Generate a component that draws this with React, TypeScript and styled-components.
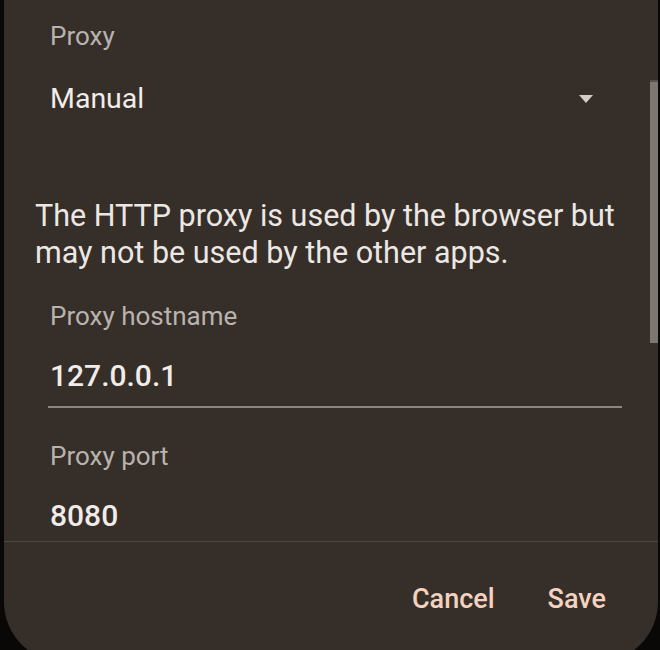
import React from "react";
import styled, { createGlobalStyle } from "styled-components";

const Global = createGlobalStyle`
  html, body { margin: 0; padding: 0; background: #0a0807; height: 650px; overflow: hidden; }
  #root { height: 650px; }
`;

const Panel = styled.div`
  position: relative;
  margin: 0 2px 0 4px;
  height: 662px;
  background: #352e29;
  border-radius: 0 0 60px 60px;
  font-family: Roboto, "Noto Sans", sans-serif;
  display: flex;
  flex-direction: column;
  overflow: hidden;
`;

const Body = styled.div`
  height: 542px;
  display: flex;
  flex-direction: column;
  border-bottom: 1px solid #4d4742;
  box-sizing: border-box;
`;

const Label = styled.div<{ $top: number }>`
  margin: ${(p) => p.$top}px 0 0 46px;
  font-size: 26px;
  line-height: 30px;
  color: #b9b3ae;
`;

const Value = styled.div<{ $top: number }>`
  margin: ${(p) => p.$top}px 0 0 46px;
  font-size: 30px;
  line-height: 34px;
  font-weight: 500;
  color: #f1ece8;
`;

const SelectRow = styled.div`
  display: flex;
  align-items: center;
  justify-content: space-between;
  margin: 32px 65px 0 46px;
`;

const SelectValue = styled.div`
  font-size: 28.5px;
  line-height: 32px;
  color: #f1ece8;
`;

const Description = styled.p`
  margin: 82px 30px 0 31px;
  font-size: 30.5px;
  line-height: 37px;
  color: #ece7e3;
`;

const Underline = styled.div`
  margin: 13px 36px 0 44px;
  height: 2px;
  background: #8b8681;
`;

const Footer = styled.div`
  display: flex;
  justify-content: flex-end;
  align-items: center;
  gap: 53px;
  padding: 42px 52px 0 0;
`;

const TextButton = styled.button`
  background: none;
  border: none;
  padding: 0;
  font-family: Roboto, "Noto Sans", sans-serif;
  font-size: 27px;
  line-height: 30px;
  font-weight: 500;
  color: #f4d2bf;
`;

const Scrollbar = styled.div`
  position: absolute;
  right: 0;
  top: 80px;
  width: 8px;
  height: 263px;
  background: #7c7771;
  border-top: 2px solid #57524d;
  box-sizing: border-box;
`;

const Caret = () => (
  <svg width="14" height="8" viewBox="0 0 14 8">
    <path d="M0 0 H14 L7 8 Z" fill="#d2cdc8" />
  </svg>
);

export default function App() {
  return (
    <>
      <Global />
      <Panel>
        <Body>
          <Label $top={21}>Proxy</Label>
          <SelectRow>
            <SelectValue>Manual</SelectValue>
            <Caret />
          </SelectRow>
          <Description>
            The HTTP proxy is used by the browser but may not be used by the other apps.
          </Description>
          <Label $top={30}>Proxy hostname</Label>
          <Value $top={28}>127.0.0.1</Value>
          <Underline />
          <Label $top={33}>Proxy port</Label>
          <Value $top={28}>8080</Value>
        </Body>
        <Footer>
          <TextButton>Cancel</TextButton>
          <TextButton>Save</TextButton>
        </Footer>
        <Scrollbar />
      </Panel>
    </>
  );
}
